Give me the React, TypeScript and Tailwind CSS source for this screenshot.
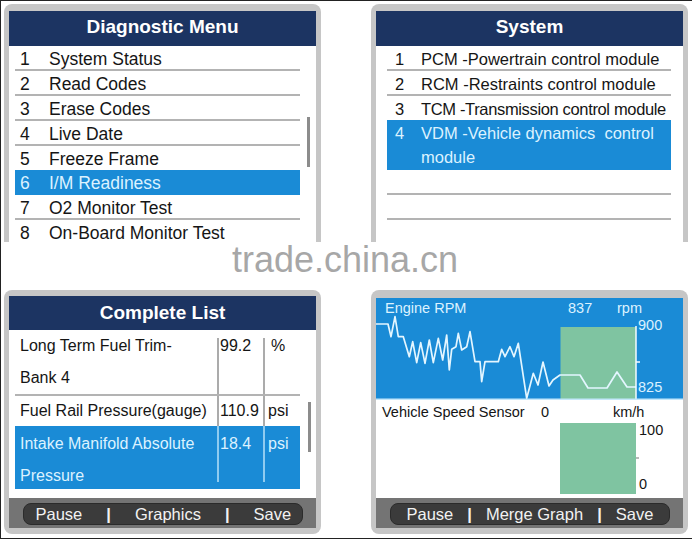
const NAVY = "bg-[#1c3462]";

const menu = [
  { n: "1", label: "System Status", line: true },
  { n: "2", label: "Read Codes", line: true },
  { n: "3", label: "Erase Codes", line: true },
  { n: "4", label: "Live Date", line: true },
  { n: "5", label: "Freeze Frame", line: false },
  { n: "6", label: "I/M Readiness", active: true },
  { n: "7", label: "O2 Monitor Test", line: true },
  { n: "8", label: "On-Board Monitor Test", line: false },
];

const systems = [
  { n: "1", label: "PCM -Powertrain control module", line: true, tight: false },
  { n: "2", label: "RCM -Restraints control module", line: true, tight: false },
  { n: "3", label: "TCM -Transmission control module", line: false, tight: true },
];

const rpmPoints =
  "376,324 388,324 391,336.7 395,316.7 398.3,336.7 403.3,336.7 409.3,356.7 412.7,341.7 416.7,362.7 420.7,342.7 425,363.3 429.3,340 433.3,362.7 438.3,338.3 442.7,360 446.7,335 449.3,370 451.7,349.3 456,346.7 458.3,333.3 461.7,350 466.7,346.7 470,331.7 475,361.7 480,361.7 481.7,381.7 485,361.7 498.3,361.7 501.7,349.3 505,356.7 510,346.7 514,356.7 518.3,343.3 526.7,398.3 533.3,373.3 538,385 543,362 549,386 553,380 560,375 580,375 588,388 607,388 617,372 627,387 636,387";

function Softkeys({ keys, gap, pad }: { keys: string[]; gap: string; pad: string }) {
  return (
    <div className="h-[30px] bg-[#747474] pt-[5px]">
      <div
        className={`mx-auto flex h-[22px] w-[280px] items-center rounded-[8px] border border-[#2b2b2b] bg-[#3b3b3b] text-[16.5px] text-[#f2f2f2] ${gap} ${pad}`}
      >
        {keys.map((k, i) => (
          <span key={i} className={k === "|" ? "font-bold" : ""}>
            {k}
          </span>
        ))}
      </div>
    </div>
  );
}

export default function App() {
  return (
    <div className="h-[539px] w-[692px] overflow-hidden border-t border-b border-l border-[#222] bg-white font-['Liberation_Sans',Arial,sans-serif] text-[#151515]">
      {/* top row */}
      <div className="flex gap-[50px] pl-[3px] pt-[3px]">
        {/* Diagnostic Menu */}
        <div className="h-[238px] w-[317px] overflow-hidden rounded-t-[8px] bg-[#c6c6c6] px-[5px] pt-[7px]">
          <div className={`${NAVY} flex h-[35px] items-center justify-center pb-[2px] text-[19px] font-bold text-white`}>
            Diagnostic Menu
          </div>
          <div className="flex h-[220px] bg-white">
            <div className="ml-[6px] w-[285px] text-[17.5px]">
              {menu.map((m) => (
                <div
                  key={m.n}
                  className={`flex items-center pl-[5px] ${
                    m.active
                      ? "h-[25px] bg-[#1a8bd6] pt-[1px] text-[#dcf2ff]"
                      : m.line
                        ? "h-[25px] border-b-2 border-[#b3b3b3] pt-[3px]"
                        : "h-[24px] pt-[2px]"
                  }`}
                >
                  <span className="w-[29px] shrink-0">{m.n}</span>
                  <span className="whitespace-nowrap">{m.label}</span>
                </div>
              ))}
            </div>
            <div className="ml-[7px] mt-[71px] h-[50px] w-[3px] bg-[#8c8c8c]" />
          </div>
        </div>

        {/* System */}
        <div className="h-[238px] w-[317px] overflow-hidden rounded-t-[8px] bg-[#c6c6c6] px-[5px] pt-[7px]">
          <div className={`${NAVY} flex h-[35px] items-center justify-center pb-[2px] text-[19px] font-bold text-white`}>
            System
          </div>
          <div className="h-[220px] bg-white">
            <div className="ml-[11px] w-[284px] text-[16.5px]">
              {systems.map((s) => (
                <div
                  key={s.n}
                  className={`flex items-center pl-[8px] ${
                    s.line ? "h-[25px] border-b-2 border-[#b3b3b3] pt-[3px]" : "h-[24px] pt-[3px]"
                  }`}
                >
                  <span className="w-[26px] shrink-0">{s.n}</span>
                  <span className={`whitespace-nowrap ${s.tight ? "tracking-[-0.35px]" : ""}`}>{s.label}</span>
                </div>
              ))}
              <div className="flex h-[50px] bg-[#1a8bd6] pl-[8px] pt-[2px] leading-[23.5px] text-[#dcf2ff]">
                <span className="w-[26px] shrink-0">4</span>
                <span className="whitespace-pre">{"VDM -Vehicle dynamics  control\nmodule"}</span>
              </div>
              <div className="h-[25px] border-b-2 border-[#b3b3b3]" />
              <div className="h-[25px] border-b-2 border-[#b3b3b3]" />
            </div>
          </div>
        </div>
      </div>

      {/* watermark strip */}
      <div className="h-[48px] pl-[231px] text-[36px] leading-[36px] text-[#a7a7a7]">trade.china.cn</div>

      {/* bottom row */}
      <div className="flex gap-[50px] pl-[3px]">
        {/* Complete List */}
        <div className="h-[244px] w-[317px] rounded-[8px] bg-[#c6c6c6] px-[5px] pt-[6px]">
          <div className={`${NAVY} flex h-[34px] items-center justify-center text-[19px] font-bold text-white`}>
            Complete List
          </div>
          <div className="flex h-[168px] bg-white text-[16px]">
            <div className="ml-[6px] w-[285px]">
              <div className="flex h-[66px] border-b-2 border-[#b3b3b3]">
                <div className="w-[202px] pl-[5px] leading-[32px]">
                  Long Term Fuel Trim-
                  <br />
                  Bank 4
                </div>
                <div className="mt-[8px] w-[46px] border-l-2 border-[#ababab] pl-[1px] leading-[16px]">99.2</div>
                <div className="mt-[8px] w-[37px] border-l-2 border-[#ababab] pl-[6px] leading-[16px]">%</div>
              </div>
              <div className="flex h-[30px] leading-[30px]">
                <div className="w-[202px] whitespace-nowrap pl-[5px]">Fuel Rail Pressure(gauge)</div>
                <div className="w-[46px] border-l-2 border-[#ababab] pl-[1px]">110.9</div>
                <div className="w-[37px] border-l-2 border-[#ababab] pl-[3px]">psi</div>
              </div>
              <div className="flex h-[63px] bg-[#1a8bd6] leading-[32px] text-[#dcf2ff]">
                <div className="w-[202px] pl-[5px] pt-[2px]">
                  Intake Manifold Absolute
                  <br />
                  Pressure
                </div>
                <div className="mb-[7px] w-[46px] border-l-2 border-[#8fcbf0] pl-[1px] pt-[2px]">18.4</div>
                <div className="mb-[7px] w-[37px] border-l-2 border-[#8fcbf0] pl-[3px] pt-[2px]">psi</div>
              </div>
            </div>
            <div className="ml-[8px] mt-[72px] h-[50px] w-[3px] bg-[#8c8c8c]" />
          </div>
          <Softkeys keys={["Pause", "|", "Graphics", "|", "Save"]} gap="gap-[24px]" pad="pl-[12px]" />
        </div>

        {/* Live graph */}
        <div className="h-[244px] w-[317px] rounded-[8px] bg-[#c6c6c6] px-[5px] pt-[8px]">
          <div className="h-[102px] bg-[#1a8bd6]">
            <svg width="307" height="102" viewBox="376 298 307 102" className="block">
              <rect x="560.5" y="327" width="75.5" height="73" fill="#7fc4a1" />
              <polyline points={rpmPoints} fill="none" stroke="#e4f6ff" strokeWidth="1.7" strokeLinejoin="round" />
              <line x1="636" y1="326" x2="636" y2="400" stroke="#f4fbff" strokeWidth="1.5" />
              <line x1="636" y1="362" x2="640" y2="362" stroke="#f4fbff" strokeWidth="1.5" />
              <line x1="376" y1="399.3" x2="683" y2="399.3" stroke="#c4e8fb" strokeWidth="1.5" />
              <g fontFamily="'Liberation Sans', Arial, sans-serif" fontSize="14.5" fill="#dcf2ff">
                <text x="385" y="312.5">Engine RPM</text>
                <text x="568" y="312.5">837</text>
                <text x="617" y="312.5">rpm</text>
                <text x="638" y="329.5">900</text>
                <text x="638" y="391.5">825</text>
              </g>
            </svg>
          </div>
          <div className="h-[98px] bg-white">
            <svg width="307" height="98" viewBox="376 400 307 98" className="block">
              <rect x="560" y="423" width="76" height="71" fill="#7fc4a1" />
              <line x1="636" y1="458" x2="639" y2="458" stroke="#8a8a8a" strokeWidth="1.2" />
              <g fontFamily="'Liberation Sans', Arial, sans-serif" fontSize="14.5" fill="#151515">
                <text x="382" y="416.7">Vehicle Speed Sensor</text>
                <text x="541" y="416.7">0</text>
                <text x="613" y="416.7">km/h</text>
                <text x="639" y="435">100</text>
                <text x="639" y="489">0</text>
              </g>
            </svg>
          </div>
          <Softkeys keys={["Pause", "|", "Merge Graph", "|", "Save"]} gap="gap-[14px]" pad="pl-[16px]" />
        </div>
      </div>
    </div>
  );
}
